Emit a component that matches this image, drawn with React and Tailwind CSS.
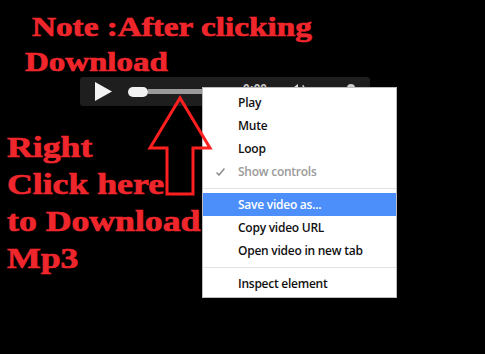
import React from "react";

function Item({ children, className = "" }) {
  return (
    <div className={"h-[23px] flex items-center pl-[35px] whitespace-nowrap " + className}>
      {children}
    </div>
  );
}

function Sep() {
  return (
    <div className="h-[10px] flex items-center">
      <div className="h-px w-full bg-[#e2e2e2]" />
    </div>
  );
}

export default function App() {
  return (
    <div className="relative w-[485px] h-[354px] bg-black overflow-hidden">
      <div className="pt-[9px] text-[#f0262d] font-bold font-['Liberation_Serif',serif] text-[27px] whitespace-nowrap [-webkit-text-stroke:0.7px_#f0262d]">
        <div className="h-[38px] leading-[36px] ml-[32px] origin-left scale-x-[1.23]">Note :After clicking</div>
        <div className="h-[30px] leading-[30px] ml-[25px] origin-left scale-x-[1.22]">Download</div>
      </div>

      <div className="ml-[80px] w-[290px] h-[29px] rounded-[3px] bg-[#1e1e1e] flex items-center">
        <svg className="ml-[15px]" width="17" height="19" viewBox="0 0 17 19">
          <polygon points="0,0 17,9.5 0,19" fill="#f2f2f2" />
        </svg>
        <div className="ml-[16px] w-[20px] h-[10px] rounded-full bg-[#f0f0f0]" />
        <div className="w-[90px] h-[5px] bg-[#9a9a9a]" />
        <div className="self-start mt-[6px] ml-[5px] text-[12px] leading-none font-bold text-[#cccccc] font-['Liberation_Sans',sans-serif]">0:00</div>
        <svg className="self-start mt-[5px] ml-[23px]" width="16" height="16" viewBox="0 0 24 24" fill="none" stroke="#dddddd" strokeWidth="2">
          <path d="M11 5 6 9H2v6h4l5 4V5z" fill="#dddddd" />
          <path d="M15.5 8.5a5 5 0 0 1 0 7" />
          <path d="M19 5a10 10 0 0 1 0 14" />
        </svg>
        <div className="self-start mt-[7px] ml-[41px] w-[8px] h-[8px] rounded-full bg-[#cccccc]" />
      </div>

      <div className="mt-[22px] ml-[7px] text-[#f0262d] font-bold font-['Liberation_Serif',serif] text-[30px] leading-[37px] whitespace-nowrap origin-left scale-x-[1.19] [-webkit-text-stroke:0.7px_#f0262d]">
        <div>Right</div>
        <div>Click here</div>
        <div>to Download</div>
        <div>Mp3</div>
      </div>

      <div className="absolute left-[202px] top-[87px] w-[195px] h-[211px] bg-white border border-[#bdbdbd] pt-[3px] font-['Open_Sans',sans-serif] text-[12px] tracking-[-0.25px] font-semibold text-[#111]">
        <Item>Play</Item>
        <Item>Mute</Item>
        <Item>Loop</Item>
        <Item className="relative text-[#9a9a9a]">
          <svg className="absolute left-[13px] top-[8px]" width="9" height="8" viewBox="0 0 9 8" fill="none" stroke="#888" strokeWidth="1.5">
            <path d="M0.5 4.5 3 7 8.5 0.5" />
          </svg>
          Show controls
        </Item>
        <Sep />
        <Item className="bg-[#4c8ffb] text-white">Save video as...</Item>
        <Item>Copy video URL</Item>
        <Item>Open video in new tab</Item>
        <Sep />
        <Item>Inspect element</Item>
      </div>

      <svg className="absolute left-0 top-0 pointer-events-none" width="485" height="354" viewBox="0 0 485 354">
        <polygon
          points="180,98 150,148 167,148 167,194 193,194 193,148 210,148"
          fill="none"
          stroke="#ff1f1f"
          strokeWidth="3"
          strokeLinejoin="miter"
        />
      </svg>
    </div>
  );
}
